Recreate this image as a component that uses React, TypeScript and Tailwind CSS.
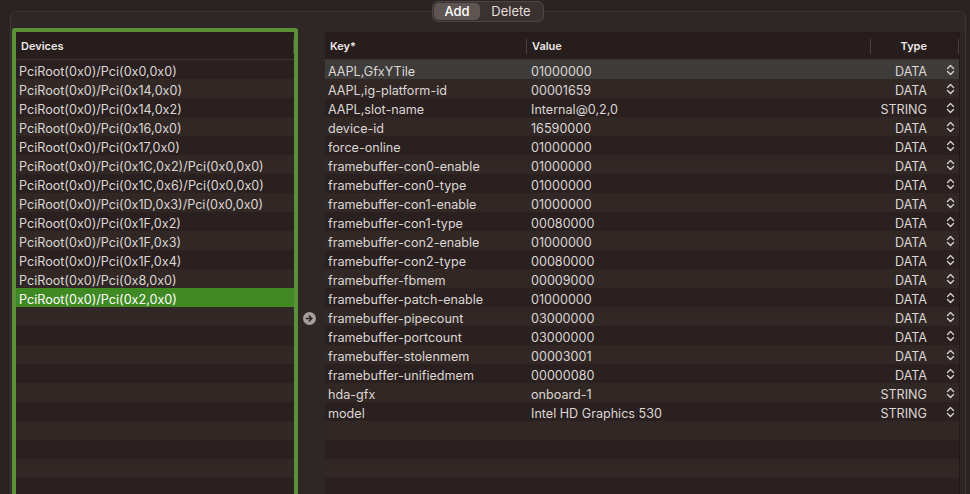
import React from 'react';

const devices = [
    'PciRoot(0x0)/Pci(0x0,0x0)',
    'PciRoot(0x0)/Pci(0x14,0x0)',
    'PciRoot(0x0)/Pci(0x14,0x2)',
    'PciRoot(0x0)/Pci(0x16,0x0)',
    'PciRoot(0x0)/Pci(0x17,0x0)',
    'PciRoot(0x0)/Pci(0x1C,0x2)/Pci(0x0,0x0)',
    'PciRoot(0x0)/Pci(0x1C,0x6)/Pci(0x0,0x0)',
    'PciRoot(0x0)/Pci(0x1D,0x3)/Pci(0x0,0x0)',
    'PciRoot(0x0)/Pci(0x1F,0x2)',
    'PciRoot(0x0)/Pci(0x1F,0x3)',
    'PciRoot(0x0)/Pci(0x1F,0x4)',
    'PciRoot(0x0)/Pci(0x8,0x0)',
    'PciRoot(0x0)/Pci(0x2,0x0)',
];

const props: [string, string, string][] = [
    ['AAPL,GfxYTile', '01000000', 'DATA'],
    ['AAPL,ig-platform-id', '00001659', 'DATA'],
    ['AAPL,slot-name', 'Internal@0,2,0', 'STRING'],
    ['device-id', '16590000', 'DATA'],
    ['force-online', '01000000', 'DATA'],
    ['framebuffer-con0-enable', '01000000', 'DATA'],
    ['framebuffer-con0-type', '01000000', 'DATA'],
    ['framebuffer-con1-enable', '01000000', 'DATA'],
    ['framebuffer-con1-type', '00080000', 'DATA'],
    ['framebuffer-con2-enable', '01000000', 'DATA'],
    ['framebuffer-con2-type', '00080000', 'DATA'],
    ['framebuffer-fbmem', '00009000', 'DATA'],
    ['framebuffer-patch-enable', '01000000', 'DATA'],
    ['framebuffer-pipecount', '03000000', 'DATA'],
    ['framebuffer-portcount', '03000000', 'DATA'],
    ['framebuffer-stolenmem', '00003001', 'DATA'],
    ['framebuffer-unifiedmem', '00000080', 'DATA'],
    ['hda-gfx', 'onboard-1', 'STRING'],
    ['model', 'Intel HD Graphics 530', 'STRING'],
];

const ROWS = 23;

const stripe = (i: number) => (i % 2 === 1 ? 'bg-[#312826]' : 'bg-[#2a201f]');

const UpDown = () => (
    <svg width="9" height="12" viewBox="0 0 9 12" fill="none" stroke="#d6d0ce" strokeWidth="1.4" strokeLinecap="round" strokeLinejoin="round">
        <path d="M1.5 4.5 L4.5 1.5 L7.5 4.5" />
        <path d="M1.5 7.5 L4.5 10.5 L7.5 7.5" />
    </svg>
);

const Sep = () => <div className="h-[15px] w-px bg-[#4a4240]" />;

const App = () => {
    return (
        <div className="relative h-[494px] w-[970px] overflow-hidden bg-[#2b2321] font-['Inter',sans-serif] text-[12.6px] text-[#dcd6d4]">
            {/* segmented control */}
            <div className="absolute left-[432px] top-px z-10 flex h-[21px] w-[112px] items-center rounded-[6px] border border-[#4d4543] bg-[#3a3230] p-px text-[13px]">
                <div className="flex h-full w-[46px] items-center justify-center rounded-[5px] bg-[#5e5553] font-medium text-white">Add</div>
                <div className="flex h-full flex-1 items-center justify-center text-[#e4dfdd]">Delete</div>
            </div>

            <div className="ml-[10px] mt-[11px] flex h-[500px] w-[956px] rounded-[6px] border border-[#3e3634] bg-[#2f2725] pl-px pt-4">
                {/* devices */}
                <div className="flex w-[286px] flex-col rounded-[3px] border-4 border-[#5a9137]">
                    <div className="flex h-[28px] shrink-0 items-center justify-between border-b border-[#3d3533] bg-[#261d1c] pl-[5px] pt-px">
                        <span className="text-[11px] font-semibold text-[#ece8e6]">Devices</span>
                        <Sep />
                    </div>
                    {Array.from({ length: ROWS }).map((_, i) => (
                        <div
                            key={i}
                            className={`flex h-[19px] shrink-0 items-center px-[3px] pt-[3px] leading-[15px] ${i === 12 ? 'bg-[#3f8a23] text-white' : stripe(i)}`}
                        >
                            {devices[i] ?? ''}
                        </div>
                    ))}
                </div>

                {/* arrow */}
                <div className="flex w-[27px] shrink-0 items-start justify-center pt-[284px]">
                    <svg width="13" height="13" viewBox="0 0 13 13" className="-ml-[4px]">
                        <circle cx="6.5" cy="6.5" r="6.5" fill="#a49e9c" />
                        <path d="M3.5 6.5 H8.8 M6.3 4 L8.8 6.5 L6.3 9" stroke="#2f2725" strokeWidth="1.7" fill="none" strokeLinecap="round" strokeLinejoin="round" />
                    </svg>
                </div>

                {/* properties */}
                <div className="mt-1 flex w-[634px] flex-col">
                    <div className="flex h-[28px] shrink-0 items-center border-b border-[#3d3533] bg-[#261d1c] pt-px text-[11px] font-semibold text-[#ece8e6]">
                        <div className="w-[201px] pl-[5px]">Key*</div>
                        <Sep />
                        <div className="w-[343px] pl-[5px]">Value</div>
                        <Sep />
                        <div className="w-[56px] text-right">Type</div>
                        <div className="flex-1" />
                        <Sep />
                    </div>
                    {Array.from({ length: ROWS }).map((_, i) => {
                        const p = props[i];
                        return (
                            <div
                                key={i}
                                className={`flex h-[19px] shrink-0 items-center pt-[3px] leading-[15px] ${i === 0 ? 'bg-[#3e3c3b]' : stripe(i)}`}
                            >
                                {p && (
                                    <>
                                        <div className="w-[202px] pl-[3px]">{p[0]}</div>
                                        <div className="w-[344px] pl-[4px]">{p[1]}</div>
                                        <div className="w-[56px] text-right">{p[2]}</div>
                                        <div className="-mt-[2px] flex flex-1 justify-end pr-[4px]">
                                            <UpDown />
                                        </div>
                                    </>
                                )}
                            </div>
                        );
                    })}
                </div>

                {/* scroll strip */}
                <div className="mt-1 w-[6px] border-l border-[#221a19] bg-[#2d2523]" />
            </div>
        </div>
    );
};

export default App;
